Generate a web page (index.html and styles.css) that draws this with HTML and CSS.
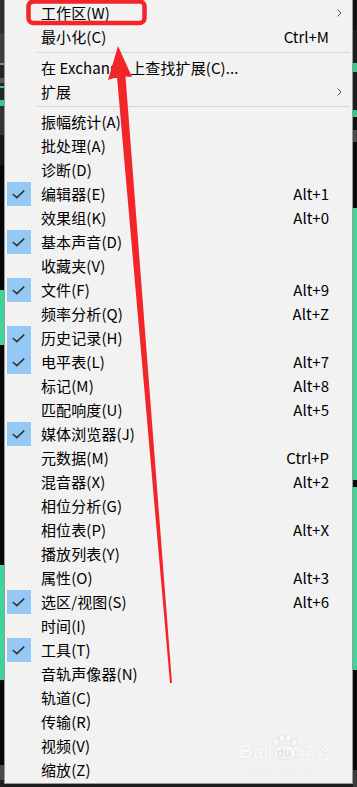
FILE: index.html
```html
<!DOCTYPE html>
<html lang="zh-CN">
<head>
<meta charset="utf-8">
<title>窗口菜单</title>
<link rel="stylesheet" href="styles.css">
</head>
<body>
<div class="screen">
  <div class="edge edge-left"></div>
  <div class="menu">
    <div class="item"><span class="gutter"></span><span class="label">工作区(W)</span><span class="key"></span><span class="sub"><svg width="5" height="8" viewBox="0 0 5 8"><polyline points="0.5,0.5 4,4 0.5,7.5" fill="none" stroke="#505050" stroke-width="1"/></svg></span></div>
    <div class="item"><span class="gutter"></span><span class="label">最小化(C)</span><span class="key">Ctrl+M</span><span class="sub"></span></div>
    <div class="sep"></div>
    <div class="item"><span class="gutter"></span><span class="label">在 Exchange 上查找扩展(C)...</span><span class="key"></span><span class="sub"></span></div>
    <div class="item"><span class="gutter"></span><span class="label">扩展</span><span class="key"></span><span class="sub"><svg width="5" height="8" viewBox="0 0 5 8"><polyline points="0.5,0.5 4,4 0.5,7.5" fill="none" stroke="#505050" stroke-width="1"/></svg></span></div>
    <div class="sep sep-tight"></div>
    <div class="item"><span class="gutter"></span><span class="label">振幅统计(A)</span><span class="key"></span><span class="sub"></span></div>
    <div class="item"><span class="gutter"></span><span class="label">批处理(A)</span><span class="key"></span><span class="sub"></span></div>
    <div class="item"><span class="gutter"></span><span class="label">诊断(D)</span><span class="key"></span><span class="sub"></span></div>
    <div class="item"><span class="gutter"><span class="check"><svg width="24" height="24" viewBox="0 0 24 24"><polyline points="5.8,12 9.8,15.6 17.2,8.6" fill="none" stroke="#333" stroke-width="1.6"/></svg></span></span><span class="label">编辑器(E)</span><span class="key">Alt+1</span><span class="sub"></span></div>
    <div class="item"><span class="gutter"></span><span class="label">效果组(K)</span><span class="key">Alt+0</span><span class="sub"></span></div>
    <div class="item"><span class="gutter"><span class="check"><svg width="24" height="24" viewBox="0 0 24 24"><polyline points="5.8,12 9.8,15.6 17.2,8.6" fill="none" stroke="#333" stroke-width="1.6"/></svg></span></span><span class="label">基本声音(D)</span><span class="key"></span><span class="sub"></span></div>
    <div class="item"><span class="gutter"></span><span class="label">收藏夹(V)</span><span class="key"></span><span class="sub"></span></div>
    <div class="item"><span class="gutter"><span class="check"><svg width="24" height="24" viewBox="0 0 24 24"><polyline points="5.8,12 9.8,15.6 17.2,8.6" fill="none" stroke="#333" stroke-width="1.6"/></svg></span></span><span class="label">文件(F)</span><span class="key">Alt+9</span><span class="sub"></span></div>
    <div class="item"><span class="gutter"></span><span class="label">频率分析(Q)</span><span class="key">Alt+Z</span><span class="sub"></span></div>
    <div class="item"><span class="gutter"><span class="check"><svg width="24" height="24" viewBox="0 0 24 24"><polyline points="5.8,12 9.8,15.6 17.2,8.6" fill="none" stroke="#333" stroke-width="1.6"/></svg></span></span><span class="label">历史记录(H)</span><span class="key"></span><span class="sub"></span></div>
    <div class="item"><span class="gutter"><span class="check"><svg width="24" height="24" viewBox="0 0 24 24"><polyline points="5.8,12 9.8,15.6 17.2,8.6" fill="none" stroke="#333" stroke-width="1.6"/></svg></span></span><span class="label">电平表(L)</span><span class="key">Alt+7</span><span class="sub"></span></div>
    <div class="item"><span class="gutter"></span><span class="label">标记(M)</span><span class="key">Alt+8</span><span class="sub"></span></div>
    <div class="item"><span class="gutter"></span><span class="label">匹配响度(U)</span><span class="key">Alt+5</span><span class="sub"></span></div>
    <div class="item"><span class="gutter"><span class="check"><svg width="24" height="24" viewBox="0 0 24 24"><polyline points="5.8,12 9.8,15.6 17.2,8.6" fill="none" stroke="#333" stroke-width="1.6"/></svg></span></span><span class="label">媒体浏览器(J)</span><span class="key"></span><span class="sub"></span></div>
    <div class="item"><span class="gutter"></span><span class="label">元数据(M)</span><span class="key">Ctrl+P</span><span class="sub"></span></div>
    <div class="item"><span class="gutter"></span><span class="label">混音器(X)</span><span class="key">Alt+2</span><span class="sub"></span></div>
    <div class="item"><span class="gutter"></span><span class="label">相位分析(G)</span><span class="key"></span><span class="sub"></span></div>
    <div class="item"><span class="gutter"></span><span class="label">相位表(P)</span><span class="key">Alt+X</span><span class="sub"></span></div>
    <div class="item"><span class="gutter"></span><span class="label">播放列表(Y)</span><span class="key"></span><span class="sub"></span></div>
    <div class="item"><span class="gutter"></span><span class="label">属性(O)</span><span class="key">Alt+3</span><span class="sub"></span></div>
    <div class="item"><span class="gutter"><span class="check"><svg width="24" height="24" viewBox="0 0 24 24"><polyline points="5.8,12 9.8,15.6 17.2,8.6" fill="none" stroke="#333" stroke-width="1.6"/></svg></span></span><span class="label">选区/视图(S)</span><span class="key">Alt+6</span><span class="sub"></span></div>
    <div class="item"><span class="gutter"></span><span class="label">时间(I)</span><span class="key"></span><span class="sub"></span></div>
    <div class="item"><span class="gutter"><span class="check"><svg width="24" height="24" viewBox="0 0 24 24"><polyline points="5.8,12 9.8,15.6 17.2,8.6" fill="none" stroke="#333" stroke-width="1.6"/></svg></span></span><span class="label">工具(T)</span><span class="key"></span><span class="sub"></span></div>
    <div class="item"><span class="gutter"></span><span class="label">音轨声像器(N)</span><span class="key"></span><span class="sub"></span></div>
    <div class="item"><span class="gutter"></span><span class="label">轨道(C)</span><span class="key"></span><span class="sub"></span></div>
    <div class="item"><span class="gutter"></span><span class="label">传输(R)</span><span class="key"></span><span class="sub"></span></div>
    <div class="item"><span class="gutter"></span><span class="label">视频(V)</span><span class="key"></span><span class="sub"></span></div>
    <div class="item"><span class="gutter"></span><span class="label">缩放(Z)</span><span class="key"></span><span class="sub"></span></div>
  </div>
  <div class="edge edge-right"></div>

  <svg class="annot" width="357" height="787" viewBox="0 0 357 787">
    <rect x="28.5" y="1.5" width="116" height="21.5" rx="5" ry="5" fill="none" stroke="#f2262a" stroke-width="4.5"/>
    <polygon points="118,46 132,77 125.5,76.5 172,683 170,683 117,77 108,80" fill="#f2262a"/>
  </svg>

  <div class="watermark">
    <div class="wm-top">
      <span class="wm-bai">Bai</span>
      <span class="wm-paw">
        <svg width="30" height="26" viewBox="0 0 30 26">
          <g fill="#f8f8f8" stroke="#e0e0e0" stroke-width="0.8">
            <ellipse cx="7" cy="8" rx="3" ry="3.6"/>
            <ellipse cx="13" cy="4" rx="3" ry="3.6"/>
            <ellipse cx="19.5" cy="4" rx="3" ry="3.6"/>
            <ellipse cx="25" cy="8.5" rx="3" ry="3.6"/>
            <path d="M5 22 C5 14 11 11 16 11 C21 11 27 14 27 22 C27 26 5 26 5 22 Z"/>
          </g>
        </svg>
        <span class="wm-du">du</span>
      </span>
      <span class="wm-jy">经验</span>
    </div>
    <div class="wm-url">jingyan.baidu.com</div>
  </div>
</div>
</body>
</html>
```

FILE: styles.css
```css
* { box-sizing: border-box; }
html, body { margin: 0; padding: 0; background: #0a0a0a; }
.screen {
  position: relative;
  width: 357px;
  height: 787px;
  display: flex;
  align-items: flex-start;
  overflow: hidden;
  background: #1c1c1c;
}
.edge { width: 4px; height: 787px; flex: none; }
.edge-left {
  background: linear-gradient(to bottom,
    #2e2e2e 0 33px, #3d3d3d 33px 63px, #8a8a8a 63px 65px, #262626 65px 78px,
    #585858 78px 83px, #262626 83px 86px, #39c98e 86px 88px, #262626 88px 100px,
    #39c98e 100px 106px, #333 106px 135px, #161616 135px 165px,
    #060606 165px 290px, #3fd49a 290px 345px, #060606 345px 565px,
    #3fd49a 565px 680px, #060606 680px 765px, #4a4a4a 765px 780px, #202020 780px);
}
.edge-right {
  background: linear-gradient(to bottom,
    #111 0 30px, #1e1e1e 30px 63px, #39c98e 63px 72px, #1e1e1e 72px 110px,
    #39c98e 110px 117px, #111 117px 130px, #4a4a4a 130px 142px, #0b0b0b 142px 208px,
    #3fd49a 208px 480px, #0b0b0b 480px 487px, #3fd49a 487px 670px,
    #080808 670px 770px, #3a3a3a 770px 787px);
}
.menu {
  flex: none;
  width: 349px;
  height: 784px;
  background: #f2f2f2;
  border: 1px solid #9a9a9a;
  border-top: 0;
  padding-top: 1px;
  font-family: "Noto Sans CJK SC", "Noto Sans", sans-serif;
  font-size: 15px;
  color: #000;
}
.item {
  display: grid;
  grid-template-columns: 36px 1fr auto 23px;
  align-items: center;
  height: 24px;
  line-height: 24px;
  white-space: nowrap;
}
.gutter { height: 24px; display: flex; align-items: center; }
.check {
  margin-left: 2px;
  width: 24px;
  height: 24px;
  background: #94c9f5;
  display: block;
}
.check svg { display: block; }
.label { letter-spacing: 0.1px; }
.key { text-align: right; font-size: 15px; }
.sub { display: flex; align-items: center; padding-left: 8px; height: 24px; }
.sub svg { display: block; }
.sep {
  height: 1px;
  background: #d6d6d6;
  margin: 3px 2px 3px 32px;
}
.sep-tight { margin-top: 2px; margin-bottom: 3px; }

.annot { position: absolute; left: 0; top: 0; pointer-events: none; }

.watermark {
  position: absolute;
  left: 239px;
  top: 732px;
  width: 92px;
  font-family: "Liberation Sans", Arial, sans-serif;
  color: #f9f9f9;
}
.wm-top { display: flex; align-items: flex-end; height: 30px; }
.wm-bai {
  font-size: 19px;
  font-weight: bold;
  line-height: 20px;
  text-shadow: 0 0 1px #d2d2d2;
}
.wm-paw { position: relative; width: 30px; height: 28px; display: block; }
.wm-paw svg { display: block; }
.wm-du {
  position: absolute;
  left: 8px;
  top: 12px;
  font-size: 12px;
  font-weight: bold;
  color: #e2e2e2;
}
.wm-jy {
  font-family: "Noto Sans CJK SC", sans-serif;
  font-size: 16px;
  line-height: 20px;
  font-weight: bold;
  text-shadow: 0 0 1px #d2d2d2;
}
.wm-url {
  font-family: "Liberation Serif", serif;
  font-size: 11px;
  line-height: 13px;
  margin-top: 2px;
  text-shadow: 0 0 1px #d8d8d8;
}
```
